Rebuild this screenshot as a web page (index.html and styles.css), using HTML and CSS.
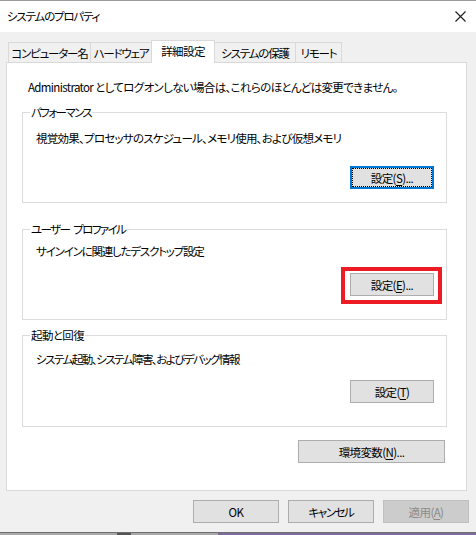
FILE: index.html
```html
<!DOCTYPE html>
<html lang="ja">
<head>
<meta charset="utf-8">
<link rel="stylesheet" href="styles.css">
</head>
<body>
<div class="window">
  <div class="titlebar">
    <span class="title">システムのプロパティ</span>
    <svg class="close" width="11" height="11" viewBox="0 0 11 11"><path d="M0.5 0.5 L10.5 10.5 M10.5 0.5 L0.5 10.5" stroke="#1a1a1a" stroke-width="1.1" fill="none"/></svg>
  </div>
  <div class="body">
    <div class="tabs">
      <div class="tab t1">コンピューター名</div>
      <div class="tab t2">ハードウェア</div>
      <div class="tab active t3">詳細設定</div>
      <div class="tab t4">システムの保護</div>
      <div class="tab t5">リモート</div>
    </div>
    <div class="panel">
      <p class="intro">Administrator としてログオンしない場合は、これらのほとんどは変更できません。</p>
      <div class="group g1">
        <span class="legend tight">パフォーマンス</span>
        <p class="desc d-perf">視覚効果、プロセッサのスケジュール、メモリ使用、および仮想メモリ</p>
        <div class="btnrow"><button class="btn focus g-btn">設定(<u>S</u>)...</button></div>
      </div>
      <div class="group g2">
        <span class="legend tight spaced">ユーザー プロファイル</span>
        <p class="desc mid">サインインに関連したデスクトップ設定</p>
        <div class="btnrow"><button class="btn g-btn marked">設定(<u>E</u>)...</button></div>
      </div>
      <div class="group g3">
        <span class="legend">起動と回復</span>
        <p class="desc d-boot">システム起動、システム障害、およびデバッグ情報</p>
        <div class="btnrow"><button class="btn g-btn">設定(<u>T</u>)</button></div>
      </div>
      <div class="envrow"><button class="btn env">環境変数(<u>N</u>)...</button></div>
    </div>
    <div class="footer">
      <button class="btn fbtn">OK</button>
      <button class="btn fbtn tight">キャンセル</button>
      <button class="btn fbtn disabled">適用(<u>A</u>)</button>
    </div>
  </div>
  <div class="desktop">
    <span class="d1"></span><span class="d2"></span><span class="d3"></span><span class="d4"></span>
  </div>
</div>
</body>
</html>
```
FILE: styles.css
```css
* { box-sizing: border-box; }
html, body { margin: 0; padding: 0; }
body {
  width: 476px;
  height: 535px;
  overflow: hidden;
  background: #f0f0f0;
  font-family: "Noto Sans CJK JP", "Noto Sans", sans-serif;
  font-size: 11.5px;
  letter-spacing: -0.6px;
  font-feature-settings: "palt";
  color: #000;
}
.tight { letter-spacing: -1.6px; }
.mid { letter-spacing: -1.2px; }
.spaced { word-spacing: 3px; }
.d-perf { letter-spacing: -0.75px; }
.d-boot { letter-spacing: -1.5px; }
.window {
  width: 476px;
  height: 535px;
  display: flex;
  flex-direction: column;
}
.titlebar {
  height: 32px;
  background: #fff;
  border-top: 1px solid #9a9a9a;
  display: flex;
  align-items: center;
  justify-content: space-between;
  padding: 0 10px 0 7px;
  flex: none;
}
.title { line-height: 16px; margin-top: -1px; letter-spacing: -1.2px; }
.close { display: block; margin-top: -1px; }
.body {
  flex: 1;
  display: flex;
  flex-direction: column;
  padding: 8px 0 0 0;
}
.tabs {
  display: flex;
  align-items: flex-end;
  height: 22px;
  padding-left: 8px;
  position: relative;
  z-index: 2;
}
.tab {
  flex: none;
  height: 20px;
  border: 1px solid #d9d9d9;
  border-bottom: none;
  border-right: none;
  background: #f0f0f0;
  display: flex;
  align-items: center;
  justify-content: center;
  line-height: 16px;
  white-space: nowrap;
  letter-spacing: -1.2px;
}
.t1 { width: 82px; }
.t2 { width: 61px; }
.t3 { width: 64px; letter-spacing: -0.6px; }
.t4 { width: 80px; border-left: none; }
.t5 { width: 47px; border-right: 1px solid #d9d9d9; }
.tab.active {
  height: 23px;
  background: #fff;
  border-right: 1px solid #d9d9d9;
  margin-bottom: -1px;
  padding-bottom: 2px;
}
.panel {
  margin-left: 6px;
  width: 461px;
  height: 429px;
  background: #fff;
  border: 1px solid #d9d9d9;
  padding: 16px 19px 0 15px;
  display: flex;
  flex-direction: column;
  position: relative;
  z-index: 1;
}
p { margin: 0; line-height: 16px; white-space: nowrap; }
.intro { padding-left: 6px; letter-spacing: -0.65px; }
.group {
  position: relative;
  border: 1px solid #dcdcdc;
  padding: 0 12px 0 13px;
}
.legend {
  position: absolute;
  top: -9px;
  left: 7px;
  padding: 0 1px;
  background: #fff;
  line-height: 16px;
  white-space: nowrap;
}
.g1 { margin-top: 17px; padding-top: 17px; padding-bottom: 13px; }
.g1 .btnrow { margin-top: 20px; }
.g2 { margin-top: 26px; padding-top: 13px; padding-bottom: 23px; }
.g2 .btnrow { margin-top: 14px; }
.g3 { margin-top: 15px; padding-top: 15px; padding-bottom: 23px; }
.g3 .btnrow { margin-top: 13px; }
.btnrow { display: flex; justify-content: flex-end; }
.btn {
  font-family: inherit;
  font-size: inherit;
  letter-spacing: -0.6px;
  font-feature-settings: "palt";
  color: #000;
  height: 23px;
  background: #e1e1e1;
  border: 1px solid #adadad;
  padding: 0;
  line-height: 16px;
  white-space: nowrap;
  position: relative;
}
.btn.tight { letter-spacing: -1.4px; }
.g-btn { width: 84px; }
.btn.focus { border: 2px solid #0078d7; }
.btn.focus::before {
  content: "";
  position: absolute;
  inset: 0;
  border: 1px dotted #000;
}
.btn.marked::after {
  content: "";
  position: absolute;
  left: -10px;
  top: -7px;
  right: -9px;
  bottom: -9px;
  border: 4px solid #ed1c24;
}
u { text-underline-offset: 2px; }
.envrow { display: flex; justify-content: flex-end; margin-top: 13px; padding-right: 2px; }
.env { width: 147px; }
.footer {
  display: flex;
  justify-content: flex-end;
  gap: 9px;
  margin-top: 9px;
  padding-right: 7px;
}
.fbtn { width: 86px; }
.fbtn.disabled { background: #cccccc; border-color: #bfbfbf; color: #8a8a8a; }
.desktop {
  margin-top: auto;
  height: 3px;
  border-top: 1px solid #6e6e6e;
  display: flex;
  flex: none;
}
.desktop span { height: 2px; display: block; }
.d1 { width: 117px; background: #a8a8a8; }
.d2 { width: 14px; background: #555; }
.d3 { width: 87px; background: #a8a8a8; }
.d4 { flex: 1; background: #7d6b9a; }
```
